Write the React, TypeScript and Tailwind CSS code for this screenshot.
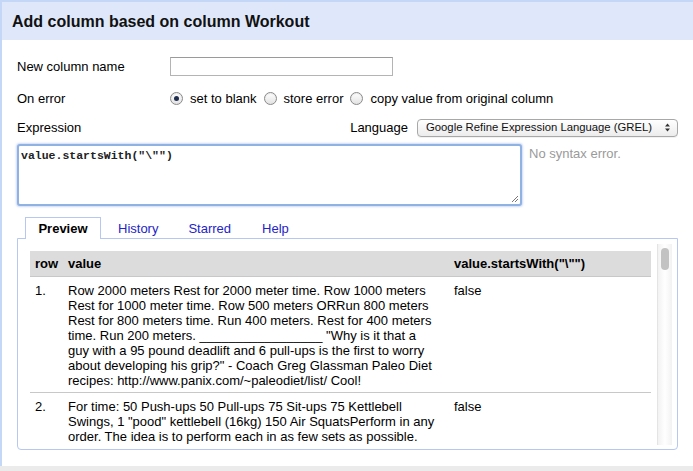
import React from "react";

function Radio({ checked }: { checked?: boolean }) {
  return (
    <span className="inline-flex items-center justify-center w-[13px] h-[13px] rounded-full border border-[#8a8a8a] bg-gradient-to-b from-[#ffffff] to-[#e2e2e2] shadow-[inset_0_1px_1px_rgba(0,0,0,0.08)]">
      {checked && <span className="w-[5px] h-[5px] rounded-full bg-[#1f2d4d]" />}
    </span>
  );
}

const rows = [
  {
    n: "1.",
    v: [
      "Row 2000 meters Rest for 2000 meter time. Row 1000 meters",
      "Rest for 1000 meter time. Row 500 meters ORRun 800 meters",
      "Rest for 800 meters time. Run 400 meters. Rest for 400 meters",
      'time. Run 200 meters. _________________ "Why is it that a',
      "guy with a 95 pound deadlift and 6 pull-ups is the first to worry",
      'about developing his grip?" - Coach Greg Glassman Paleo Diet',
      "recipes: http://www.panix.com/~paleodiet/list/ Cool!",
    ],
    r: "false",
  },
  {
    n: "2.",
    v: [
      "For time: 50 Push-ups 50 Pull-ups 75 Sit-ups 75 Kettlebell",
      'Swings, 1 "pood" kettlebell (16kg) 150 Air SquatsPerform in any',
      "order. The idea is to perform each in as few sets as possible.",
    ],
    r: "false",
  },
];

export default function App() {
  return (
    <div className="w-[693px] h-[471px] bg-white flex flex-col overflow-hidden font-['Liberation_Sans',Arial,sans-serif] text-[13px] leading-[15px] text-black">
      <div className="flex-1 flex flex-col border-l-2 border-t-2 border-[#c4d7f6] min-h-0">
        <div className="h-[38px] shrink-0 bg-[#dfe8fa] pl-[10px] flex items-center">
          <span className="text-[16px] font-bold leading-[20px] text-[#111] mt-[1px]">Add column based on column Workout</span>
        </div>
        <div className="flex-1 flex flex-col pl-[15px] pr-[15px] min-h-0">
          <div className="flex items-center h-[19px] mt-[17px]">
            <span className="w-[153px]">New column name</span>
            <div className="w-[223px] h-[19px] border border-[#b4b4b4] border-t-[#9a9a9a] bg-white" />
          </div>
          <div className="flex items-center h-[19px] mt-[13px]">
            <span className="w-[153px]">On error</span>
            <Radio checked />
            <span className="ml-[7px]">set to blank</span>
            <span className="ml-[7px] flex"><Radio /></span>
            <span className="ml-[7px]">store error</span>
            <span className="ml-[7px] flex"><Radio /></span>
            <span className="ml-[7px]">copy value from original column</span>
          </div>
          <div className="flex items-center h-[19px] mt-[10px]">
            <span className="flex-1">Expression</span>
            <span className="mr-[9px]">Language</span>
            <div className="w-[261px] shrink-0 h-[18px] rounded-[4px] border border-[#a8a8a8] bg-gradient-to-b from-[#ffffff] to-[#ececec] flex items-center pl-[8px] pr-[6px] text-[11.3px] text-[#111] whitespace-nowrap overflow-hidden shadow-[0_1px_0_rgba(0,0,0,0.05)]">
              <span className="flex-1 min-w-0 overflow-hidden">Google Refine Expression Language (GREL)</span>
              <svg className="shrink-0" width="7" height="11" viewBox="0 0 7 11">
                <path d="M1 4.5 L3.5 1.5 L6 4.5Z" fill="#333" />
                <path d="M1 6.5 L3.5 9.5 L6 6.5Z" fill="#333" />
              </svg>
            </div>
          </div>
          <div className="flex mt-[7px]">
            <div className="relative w-[505px] h-[62px] rounded-[3px] border-2 border-[#8fb1e3] shadow-[0_0_2px_1px_rgba(110,150,220,0.35)] bg-white px-[2px] pt-[1px]">
              <span className="font-['Liberation_Mono',monospace] text-[11.5px] leading-[14px] font-bold text-[#222] whitespace-pre">{'value.startsWith("\\"")'}</span>
              <svg className="absolute right-[1px] bottom-[1px]" width="8" height="8" viewBox="0 0 8 8">
                <path d="M7 1 L1 7 M7 4 L4 7" stroke="#777" strokeWidth="1" />
              </svg>
            </div>
            <span className="ml-[7px] mt-[2px] text-[#9a9a9a]">No syntax error.</span>
          </div>
          <div className="flex mt-[11px] ml-[8px] h-[22px] items-end relative z-10">
            <div className="h-[22px] w-[76px] border border-b-0 border-[#b7c7f2] bg-white flex items-center justify-center font-bold">Preview</div>
            <div className="h-[22px] flex items-center ml-[17px] text-[#2424c8]">History</div>
            <div className="h-[22px] flex items-center ml-[30px] text-[#2424c8]">Starred</div>
            <div className="h-[22px] flex items-center ml-[31px] text-[#2424c8]">Help</div>
          </div>
          <div className="-mt-[1px] h-[212px] border border-[#b7c7f2] rounded-b-[4px] pl-[12px] pr-[5px] pt-[5px] flex">
            <div className="flex-1 h-[201px] overflow-hidden pt-[7px]">
              <table className="w-[621px] border-collapse table-fixed">
                <colgroup>
                  <col className="w-[33px]" />
                  <col className="w-[384px]" />
                  <col />
                </colgroup>
                <thead>
                  <tr className="bg-[#dcdcdc] h-[25px] border-b border-[#c8c8c8]">
                    <th className="text-left font-bold pl-[5px] align-middle">row</th>
                    <th className="text-left font-bold pl-[5px] align-middle">value</th>
                    <th className="text-left font-bold pl-[7px] align-middle">value.startsWith("\"")</th>
                  </tr>
                </thead>
                <tbody>
                  {rows.map((r, i) => (
                    <tr key={i} className={i === 0 ? "border-b border-[#c8c8c8]" : ""}>
                      <td className="align-top pl-[5px] pt-[6px] pb-[4px]">{r.n}</td>
                      <td className="align-top pl-[5px] pr-[4px] pt-[6px] pb-[4px]">
                        {r.v.map((l, j) => (
                          <div key={j} className="whitespace-nowrap">{l}</div>
                        ))}
                      </td>
                      <td className="align-top pl-[7px] pt-[6px] pb-[4px]">{r.r}</td>
                    </tr>
                  ))}
                </tbody>
              </table>
            </div>
            <div className="w-[15px] h-[201px] ml-[5px] bg-gradient-to-r from-[#f2f2f2] via-[#ffffff] to-[#f2f2f2] border-l border-[#e4e4e4] flex justify-center pt-[4px]">
              <div className="w-[8px] h-[22px] rounded-full bg-[#c2c2c2]" />
            </div>
          </div>
          <div className="flex-1" />
        </div>
      </div>
      <div className="h-[5px] bg-[#ebebeb] shrink-0" />
    </div>
  );
}
